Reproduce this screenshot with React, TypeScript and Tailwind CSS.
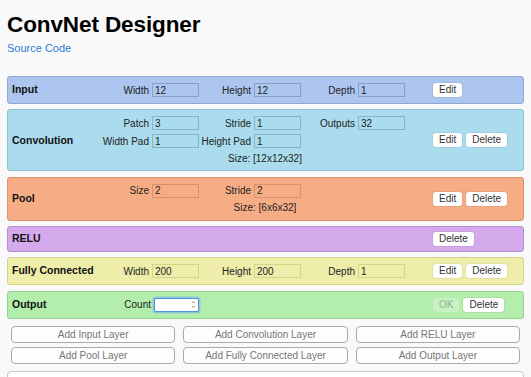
import React from "react";

type FieldDef = { label: string; value: string } | null;

function Field({ f, inputCls }: { f: FieldDef; inputCls: string }) {
  if (!f) return <div />;
  return (
    <div className="flex items-center justify-end gap-[3px] h-[18px]">
      <span className="text-[10px] text-[#222] whitespace-nowrap">{f.label}</span>
      <input
        readOnly
        value={f.value}
        className={`w-[47px] h-[14px] border ${inputCls} bg-transparent text-[10px] leading-[12px] px-[2px] text-[#222] outline-none`}
      />
    </div>
  );
}

function Btn({ children, disabled }: { children: React.ReactNode; disabled?: boolean }) {
  return (
    <button
      className={
        disabled
          ? "h-[14px] px-[6px] rounded-[3px] bg-[#c8f2c4] text-[#8fb08c] text-[10px] leading-[14px]"
          : "h-[14px] px-[6px] rounded-[3px] bg-white text-[#333] text-[10px] leading-[14px] shadow-[0_0_0_0.5px_rgba(0,0,0,0.12)]"
      }
    >
      {children}
    </button>
  );
}

function Panel({
  title,
  panelCls,
  inputCls,
  rows,
  size,
  buttons,
  custom,
}: {
  title: string;
  panelCls: string;
  inputCls: string;
  rows: FieldDef[][];
  size?: string;
  buttons: React.ReactNode;
  custom?: React.ReactNode;
}) {
  return (
    <div className={`flex items-center border rounded-[3px] px-[4px] py-[4px] ${panelCls}`}>
      <div className="w-[85px] shrink-0 text-[10.5px] font-bold text-[#111]">{title}</div>
      <div className="w-[336px] shrink-0 flex flex-col">
        {custom}
        {rows.length > 0 && (
          <div className="grid grid-cols-[102px_102px_104px]">
            {rows.map((r, i) =>
              r.map((f, j) => <Field key={`${i}-${j}`} f={f} inputCls={inputCls} />)
            )}
          </div>
        )}
        {size && (
          <div className="h-[16px] flex items-center justify-center text-[10px] text-[#222]">
            Size: {size}
          </div>
        )}
      </div>
      <div className="flex items-center gap-[4px]">{buttons}</div>
    </div>
  );
}

function AddBtn({ children }: { children: React.ReactNode }) {
  return (
    <button className="h-[17px] rounded-[4px] border border-[#aaaaaa] bg-[#fdfdfd] text-[10px] leading-[15px] text-[#777]">
      {children}
    </button>
  );
}

export default function App() {
  return (
    <div className="h-[377px] overflow-hidden bg-[#f9f9f9] font-['Liberation_Sans',Arial,sans-serif] text-[#222]">
      <div className="px-[7px]">
        <h1 className="pt-[11px] text-[22.5px] leading-[28px] font-bold text-black tracking-[-0.1px]">
          ConvNet Designer
        </h1>
        <a className="block mt-[2px] text-[11px] leading-[14px] text-[#2a7fd4] w-fit">Source Code</a>

        <div className="mt-[21px] flex flex-col gap-[5.4px]">
          <Panel
            title="Input"
            panelCls="bg-[#adc6ef] border-[#8fa7d2]"
            inputCls="border-[#8a9fc8]"
            rows={[
              [
                { label: "Width", value: "12" },
                { label: "Height", value: "12" },
                { label: "Depth", value: "1" },
              ],
            ]}
            buttons={<Btn>Edit</Btn>}
          />
          <Panel
            title="Convolution"
            panelCls="bg-[#aadced] border-[#8cc0d2]"
            inputCls="border-[#86b4c6]"
            rows={[
              [
                { label: "Patch", value: "3" },
                { label: "Stride", value: "1" },
                { label: "Outputs", value: "32" },
              ],
              [
                { label: "Width Pad", value: "1" },
                { label: "Height Pad", value: "1" },
                null,
              ],
            ]}
            size="[12x12x32]"
            buttons={
              <>
                <Btn>Edit</Btn>
                <Btn>Delete</Btn>
              </>
            }
          />
          <Panel
            title="Pool"
            panelCls="bg-[#f6ad86] border-[#d8926d]"
            inputCls="border-[#d4926f]"
            rows={[
              [
                { label: "Size", value: "2" },
                { label: "Stride", value: "2" },
                null,
              ],
            ]}
            size="[6x6x32]"
            buttons={
              <>
                <Btn>Edit</Btn>
                <Btn>Delete</Btn>
              </>
            }
          />
          <Panel
            title="RELU"
            panelCls="bg-[#d5aaed] border-[#b58fcd]"
            inputCls="border-[#b58fcd]"
            rows={[]}
            buttons={<Btn>Delete</Btn>}
          />
          <Panel
            title="Fully Connected"
            panelCls="bg-[#eeeeaa] border-[#d2d28e]"
            inputCls="border-[#d4d48a]"
            rows={[
              [
                { label: "Width", value: "200" },
                { label: "Height", value: "200" },
                { label: "Depth", value: "1" },
              ],
            ]}
            buttons={
              <>
                <Btn>Edit</Btn>
                <Btn>Delete</Btn>
              </>
            }
          />
          <Panel
            title="Output"
            panelCls="bg-[#b3eead] border-[#95d28f]"
            inputCls="border-[#95d28f]"
            rows={[]}
            custom={
              <div className="grid grid-cols-[102px_102px_104px]">
                <div className="flex items-center justify-end gap-[3px] h-[18px]">
                  <span className="text-[10px] text-[#222]">Count</span>
                  <div className="w-[45px] h-[14px] bg-white border border-[#4d92e4] rounded-[2px] shadow-[0_0_0_1.5px_rgba(110,170,240,0.55)] flex items-center justify-end pr-[2px]">
                    <svg width="5" height="9" viewBox="0 0 5 9">
                      <path d="M0.8 3.2 L2.5 1.4 L4.2 3.2" fill="none" stroke="#777" strokeWidth="0.8" />
                      <path d="M0.8 5.8 L2.5 7.6 L4.2 5.8" fill="none" stroke="#777" strokeWidth="0.8" />
                    </svg>
                  </div>
                </div>
              </div>
            }
            buttons={
              <>
                <Btn disabled>OK</Btn>
                <Btn>Delete</Btn>
              </>
            }
          />
        </div>

        <div className="mt-[7px] px-[4px] grid grid-cols-3 gap-x-[8px] gap-y-[4px]">
          <AddBtn>Add Input Layer</AddBtn>
          <AddBtn>Add Convolution Layer</AddBtn>
          <AddBtn>Add RELU Layer</AddBtn>
          <AddBtn>Add Pool Layer</AddBtn>
          <AddBtn>Add Fully Connected Layer</AddBtn>
          <AddBtn>Add Output Layer</AddBtn>
        </div>

        <div className="mt-[7px] h-[60px] rounded-[4px] border border-[#c8c8c8] bg-white" />
      </div>
    </div>
  );
}
